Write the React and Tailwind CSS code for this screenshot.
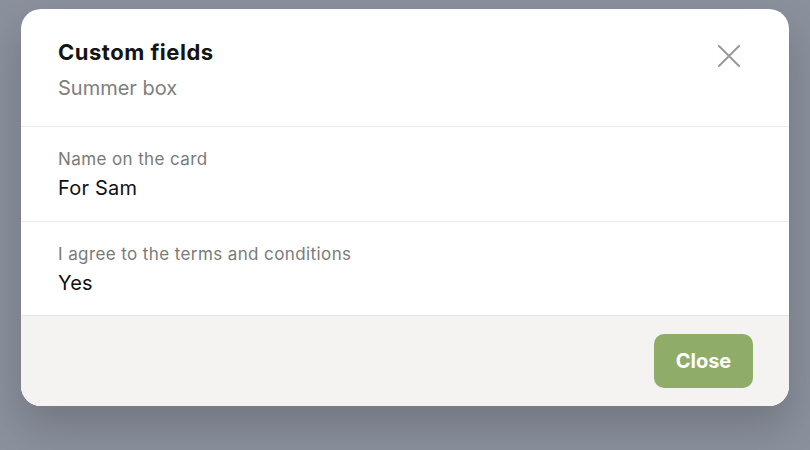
import React from "react";

export default function App() {
  return (
    <div className="w-[810px] h-[450px] bg-[#8a909c] overflow-hidden pt-[9px] pl-[21px]" style={{ fontFamily: "Inter, 'Liberation Sans', sans-serif" }}>
      <div className="w-[768px] h-[397px] bg-white rounded-[20px] overflow-hidden flex flex-col shadow-[0_20px_40px_rgba(0,0,0,0.18)]">
        <div className="h-[118px] shrink-0 border-b border-[#ebebeb] pl-[37px] pr-[49px] pt-[29px] flex justify-between items-start">
          <div className="flex flex-col">
            <div className="text-[22px] leading-[28px] font-bold tracking-[0.5px] text-[#141414]">Custom fields</div>
            <div className="text-[20px] leading-[26px] text-[#7e7e7e] mt-[9px]">Summer box</div>
          </div>
          <button className="mt-[7px] text-[#9a9a9a]">
            <svg width="22" height="22" viewBox="0 0 22 22" fill="none" stroke="currentColor" strokeWidth="2" strokeLinecap="round">
              <path d="M1 1 L21 21 M21 1 L1 21" />
            </svg>
          </button>
        </div>
        <div className="h-[95px] shrink-0 border-b border-[#ebebeb] pl-[37px] pt-[20px] flex flex-col">
          <div className="text-[17px] leading-[24px] tracking-[0.4px] text-[#7a7a7a]">Name on the card</div>
          <div className="text-[20px] leading-[26px] tracking-[0.2px] text-[#111] mt-[4px]">For Sam</div>
        </div>
        <div className="h-[94px] shrink-0 border-b border-[#e6e6e6] pl-[37px] pt-[20px] flex flex-col">
          <div className="text-[17px] leading-[24px] tracking-[0.4px] text-[#7a7a7a]">I agree to the terms and conditions</div>
          <div className="text-[20px] leading-[26px] tracking-[0.2px] text-[#111] mt-[4px]">Yes</div>
        </div>
        <div className="flex-1 bg-[#f4f3f1] flex items-center justify-end pr-[36px]">
          <button className="w-[99px] h-[54px] rounded-[10px] bg-[#8fad69] text-white text-[20px] font-bold">Close</button>
        </div>
      </div>
    </div>
  );
}
